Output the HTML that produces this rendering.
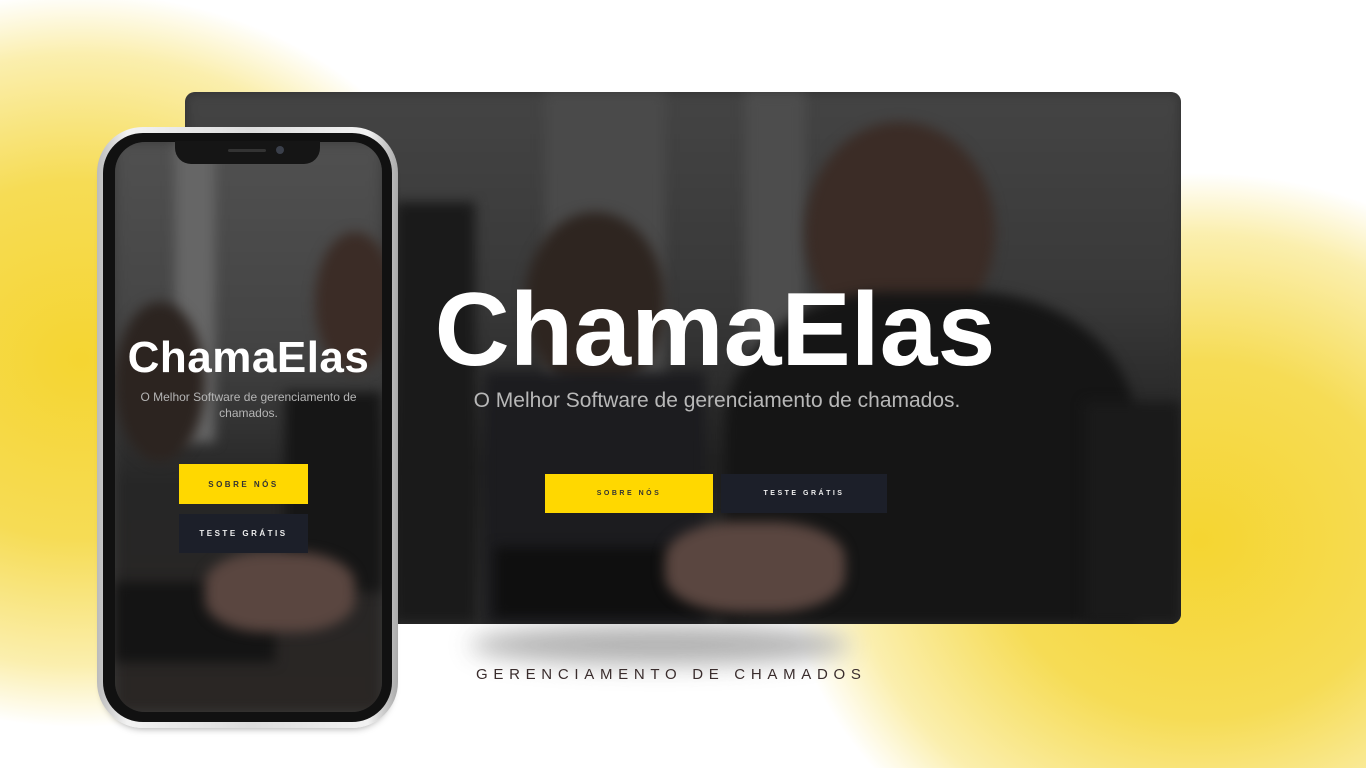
<!DOCTYPE html>
<html style="width:1366px;height:768px;overflow:hidden"><head><meta charset="utf-8"><style>
*{margin:0;padding:0;box-sizing:border-box}
body{width:1366px;height:768px;overflow:hidden;position:relative;font-family:"Liberation Sans",sans-serif;
background:
radial-gradient(580px 510px at 80px 360px,#f5d531 0%,#f6dc55 35%,rgba(248,228,120,.6) 60%,rgba(255,255,255,0) 72%),
radial-gradient(580px 510px at 1200px 540px,#f5d531 0%,#f6dc55 35%,rgba(248,228,120,.6) 60%,rgba(255,255,255,0) 72%),
#fff}
.shadow{position:absolute;left:470px;top:625px;width:380px;height:40px;border-radius:50%;background:#aaa;filter:blur(12px);opacity:.9}
.card{position:absolute;left:185px;top:92px;width:996px;height:532px;border-radius:10px;overflow:hidden;background:#2e2e2e}
.card .b{position:absolute;filter:blur(6px)}
.tag{position:absolute;left:476px;top:666px;font-size:15px;letter-spacing:5.7px;color:#3a2d2d;white-space:nowrap}
.phone{position:absolute;left:97px;top:127px;width:301px;height:601px;border-radius:46px;background:linear-gradient(90deg,#bbb,#f2f2f2 10%,#ddd 50%,#f2f2f2 90%,#aaa);box-shadow:0 6px 8px -6px rgba(0,0,0,.4)}
.phone .inner{position:absolute;left:6px;top:6px;right:6px;bottom:6px;border-radius:40px;background:#111}
.screen{position:absolute;left:115px;top:142px;width:267px;height:570px;border-radius:30px;overflow:hidden;background:#3a3a3a}
.notch{position:absolute;left:175px;top:141px;width:145px;height:23px;background:#151515;border-radius:0 0 16px 16px}
.btn{position:absolute;display:flex;align-items:center;justify-content:center;font-weight:bold;letter-spacing:2.5px}
</style></head><body>
<div class="shadow"></div>
<div class="card">
 <div class="b" style="left:0;top:0;width:996px;height:532px;background:linear-gradient(180deg,#444 0%,#383838 40%,#212121 70%,#2a2a2a 100%)"></div>
 <div class="b" style="left:360px;top:0;width:120px;height:300px;background:#4a4a4a"></div>
 <div class="b" style="left:560px;top:0;width:60px;height:280px;background:#4d4d4d"></div>
 <div class="b" style="left:210px;top:110px;width:80px;height:420px;background:#1a1a1a"></div>
 <div class="b" style="left:620px;top:30px;width:190px;height:220px;border-radius:50%;background:#3b2c26"></div>
 <div class="b" style="left:540px;top:200px;width:410px;height:332px;border-radius:40% 40% 0 0;background:#151515"></div>
 <div class="b" style="left:340px;top:120px;width:140px;height:180px;border-radius:50%;background:#2e2520"></div>
 <div class="b" style="left:300px;top:280px;width:220px;height:252px;background:#1c1c1f"></div>
 <div class="b" style="left:310px;top:455px;width:240px;height:70px;background:#0f0f0f"></div>
 <div class="b" style="left:480px;top:430px;width:180px;height:90px;border-radius:40%;background:#5a4640"></div>
 <div class="b" style="left:900px;top:310px;width:96px;height:222px;background:#1a1a1a"></div>
 <div style="position:absolute;left:32px;top:188px;width:996px;text-align:center;color:#fff;font-weight:bold;font-size:104px;line-height:100px;white-space:nowrap">ChamaElas</div>
 <div style="position:absolute;left:34px;top:297px;width:996px;text-align:center;color:#b8b8b8;font-size:21px;line-height:24px">O Melhor Software de gerenciamento de chamados.</div>
 <div class="btn" style="left:360px;top:382px;width:168px;height:39px;background:#ffd800;color:#333;font-size:7px">SOBRE NÓS</div>
 <div class="btn" style="left:536px;top:382px;width:166px;height:39px;background:#1c1f29;color:#eee;font-size:7px">TESTE GRÁTIS</div>
</div>
<div class="phone"><div class="inner"></div></div>
<div class="screen">
 <div style="position:absolute;filter:blur(6px);left:0;top:0;width:267px;height:570px;background:linear-gradient(180deg,#505050 0%,#444 35%,#262626 60%,#2a2624 100%)"></div>
 <div style="position:absolute;filter:blur(6px);left:60px;top:0;width:40px;height:300px;background:#666"></div>
 <div style="position:absolute;filter:blur(6px);left:200px;top:90px;width:80px;height:140px;border-radius:50%;background:#3b2c26"></div>
 <div style="position:absolute;filter:blur(6px);left:0;top:160px;width:90px;height:160px;border-radius:50%;background:#2c2420"></div>
 <div style="position:absolute;filter:blur(6px);left:170px;top:250px;width:97px;height:200px;background:#161616"></div>
 <div style="position:absolute;filter:blur(6px);left:0;top:440px;width:160px;height:80px;background:#141414"></div>
 <div style="position:absolute;filter:blur(6px);left:90px;top:410px;width:150px;height:80px;border-radius:40%;background:#5a4640"></div>
 <div style="position:absolute;left:0;top:193px;width:267px;text-align:center;color:#fff;font-weight:bold;font-size:44px;letter-spacing:.5px;line-height:46px">ChamaElas</div>
 <div style="position:absolute;left:18px;top:247px;width:231px;text-align:center;color:#b5b5b5;font-size:12px;line-height:16px">O Melhor Software de gerenciamento de chamados.</div>
 <div class="btn" style="left:64px;top:322px;width:129px;height:40px;background:#ffd800;color:#333;font-size:8px">SOBRE NÓS</div>
 <div class="btn" style="left:64px;top:372px;width:129px;height:39px;background:#1c1f29;color:#eee;font-size:8px">TESTE GRÁTIS</div>
</div>
<div class="notch"><div style="position:absolute;left:53px;top:8px;width:38px;height:3px;border-radius:2px;background:#333"></div><div style="position:absolute;left:101px;top:5px;width:8px;height:8px;border-radius:50%;background:#3a3f4a"></div></div>
<div class="tag">GERENCIAMENTO DE CHAMADOS</div>
</body></html>
